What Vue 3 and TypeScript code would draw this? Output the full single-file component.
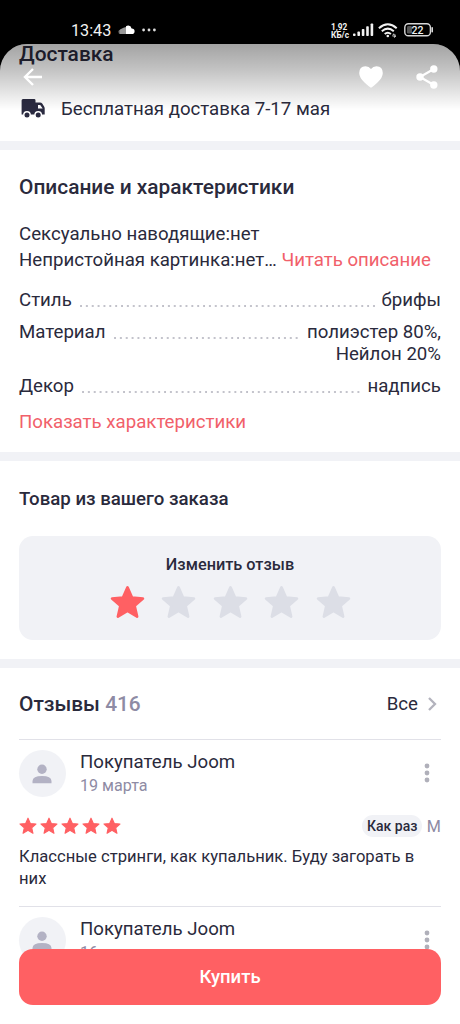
<script setup lang="ts">
interface Spec {
  label: string
  lines: string[]
}

interface Review {
  author: string
  date: string
  stars: number
  fit: string
  size: string
  text: string
}

const specs: Spec[] = [
  { label: 'Стиль', lines: ['брифы'] },
  { label: 'Материал', lines: ['полиэстер 80%,', 'Нейлон 20%'] },
  { label: 'Декор', lines: ['надпись'] },
]

const myRating = 1

const reviews: Review[] = [
  {
    author: 'Покупатель Joom',
    date: '19 марта',
    stars: 5,
    fit: 'Как раз',
    size: 'M',
    text: 'Классные стринги, как купальник. Буду загорать в них',
  },
  { author: 'Покупатель Joom', date: '16 марта', stars: 0, fit: '', size: '', text: '' },
]

const starPath =
  'M12 1.6 L15.1 8.6 L22.6 9.3 L16.9 14.3 L18.6 21.7 L12 17.8 L5.4 21.7 L7.1 14.3 L1.4 9.3 L8.9 8.6 Z'
</script>

<template>
  <div class="screen">
    <div class="status">
      <span class="clock">13:43</span>
      <svg class="cloud" viewBox="0 0 17 10">
        <path d="M0.5 6.5 Q0.6 5 2 4.8 V9 H1.6 Q0.5 8.6 0.5 6.5Z" fill="#777" />
        <path d="M2 4.6 L4 3.5 L5.5 2.8 L8 2 V9 H2Z" fill="#999" />
        <path d="M8 1.3 Q9.2 0.5 10.3 0.6 Q13 0.8 13.6 3.6 Q16.5 3.5 16.6 6.2 Q16.5 9 14 9 H8Z" fill="#fff" />
      </svg>
      <svg class="more" viewBox="0 0 14 4" fill="#ddd">
        <circle cx="1.6" cy="2" r="1.4" /><circle cx="7" cy="2" r="1.4" /><circle cx="12.4" cy="2" r="1.4" />
      </svg>
      <span class="speed"><span>1,92</span><span>КБ/с</span></span>
      <svg class="signal" viewBox="0 0 21 14" fill="#f2f2f2">
        <rect x="0" y="10.6" width="2.6" height="2.4" rx=".8" />
        <rect x="4.4" y="8.6" width="2.6" height="4.4" rx=".8" />
        <rect x="8.8" y="6" width="2.6" height="7" rx=".8" />
        <rect x="13.2" y="3.2" width="2.6" height="9.8" rx=".8" />
        <rect x="17.6" y="0.4" width="2.6" height="12.6" rx=".8" />
      </svg>
      <svg class="wifi" viewBox="0 0 20 15" fill="none" stroke="#f2f2f2" stroke-width="2">
        <path d="M0.9 5.2 Q9.8 -2.6 18.7 5.2" />
        <path d="M3.8 8.2 Q9.8 3.1 15.8 8.2" />
        <path d="M6.7 11 Q9.8 8.4 12.9 11" />
        <circle cx="9.8" cy="13" r="1.3" fill="#f2f2f2" stroke="none" />
        <path d="M14.4 12.2 L16 10.8 V12.2 H18 M18 13 L16.4 14.4 V13 H14.4" stroke-width=".8" />
      </svg>
      <svg class="battery" viewBox="0 0 30 14">
        <rect x=".8" y=".8" width="25.6" height="12" rx="3.6" fill="none" stroke="#d8d8d8" stroke-width="1.4" />
        <rect x="3" y="3" width="5" height="7.6" rx="1.4" fill="#555" />
        <path d="M28.2 4.8 V8.8" stroke="#d8d8d8" stroke-width="1.6" stroke-linecap="round" />
        <text x="13.5" y="10.6" text-anchor="middle" fill="#f2f2f2">22</text>
      </svg>
    </div>

    <main class="sheet">
      <section class="delivery">
        <h2>Доставка</h2>
        <div class="ship">
          <svg class="truck" viewBox="0 0 24 20">
            <path
              d="M2 0 H13.2 Q14.5 0 14.5 1.4 V3.5 H19 Q20.4 3.5 21.2 4.6 L23.1 7.5 Q23.7 8.4 23.7 9.5 V15.6 H0.6 V1.5 Q0.6 0 2 0Z"
              fill="#2a2a40"
            />
            <path d="M17 6 H19.2 L21.7 9.6 H17Z" fill="#fff" />
            <g fill="#2a2a40" stroke="#fff" stroke-width="1.4">
              <circle cx="6" cy="16" r="3.2" /><circle cx="17.2" cy="16" r="3.2" />
            </g>
          </svg>
          <span>Бесплатная доставка 7-17 мая</span>
        </div>
      </section>

      <section class="description">
        <h2>Описание и характеристики</h2>
        <p class="about">
          Сексуально наводящие:нет<br />Непристойная картинка:нет… <a>Читать описание</a>
        </p>
        <dl class="specs">
          <div v-for="spec in specs" :key="spec.label" class="spec">
            <dt>{{ spec.label }}</dt>
            <span class="leader"></span>
            <dd><span v-for="line in spec.lines" :key="line">{{ line }}</span></dd>
          </div>
        </dl>
        <a class="show-all">Показать характеристики</a>
      </section>

      <section class="order">
        <h3>Товар из вашего заказа</h3>
        <div class="rate">
          <strong>Изменить отзыв</strong>
          <div class="rate-stars">
            <svg v-for="n in 5" :key="n" viewBox="0 0 24 24" :class="{ on: n <= myRating }">
              <path :d="starPath" />
            </svg>
          </div>
        </div>
      </section>

      <section class="reviews">
        <header>
          <h2>Отзывы <span>416</span></h2>
          <a class="all">
            Все
            <svg viewBox="0 0 10 16"><path d="M2 2 L8 8 L2 14" /></svg>
          </a>
        </header>
        <article v-for="(review, i) in reviews" :key="i">
          <div class="who">
            <span class="avatar">
              <svg viewBox="0 0 20 20">
                <circle cx="10" cy="5.2" r="4.7" />
                <path d="M0.5 19.3 V17 Q0.8 12 10 12 Q19.2 12 19.5 17 V19.3Z" />
              </svg>
            </span>
            <div class="name">
              <b>{{ review.author }}</b>
              <time>{{ review.date }}</time>
            </div>
            <svg class="kebab" viewBox="0 0 6 20">
              <circle cx="3" cy="3" r="2.4" /><circle cx="3" cy="10" r="2.4" /><circle cx="3" cy="17" r="2.4" />
            </svg>
          </div>
          <template v-if="review.text">
            <div class="score">
              <svg v-for="n in review.stars" :key="n" viewBox="0 0 24 24"><path :d="starPath" /></svg>
              <span class="fit">{{ review.fit }}</span>
              <span class="size">{{ review.size }}</span>
            </div>
            <p>{{ review.text }}</p>
          </template>
        </article>
      </section>
    </main>

    <nav class="toolbar">
      <svg class="back" viewBox="0 0 20 18"><path d="M10 1 L2 9 L10 17 M2 9 H19" /></svg>
      <svg class="heart" viewBox="0 0 24 22">
        <path d="M12 21.8 Q10.8 21.3 5.5 16.4 Q0.2 11.4 0.2 6.9 Q0.3 0.6 6.5 0.2 Q10 0.2 12 3 Q14 0.2 17.5 0.2 Q23.7 0.6 23.8 6.9 Q23.8 11.4 18.5 16.4 Q13.2 21.3 12 21.8Z" />
      </svg>
      <svg class="share" viewBox="0 0 22 24">
        <path d="M17.8 4 L4 12 L17.8 20" />
        <circle cx="17.8" cy="4" r="3.7" /><circle cx="4" cy="12" r="3.7" /><circle cx="17.8" cy="20" r="3.7" />
      </svg>
    </nav>

    <button class="buy">Купить</button>
  </div>
</template>

<style>
body {
  margin: 0;
  background: #000;
}
</style>

<style scoped>
.screen {
  position: relative;
  width: 460px;
  height: 1024px;
  overflow: hidden;
  background: #000;
  color: #2a2a3c;
  font-family: Roboto, 'Noto Sans', sans-serif;
  font-size: 18.65px;
}
h2,
h3,
p,
dl,
dd {
  margin: 0;
}
h2 {
  font-size: 20.9px;
  font-weight: 500;
  line-height: 26px;
}
h3 {
  font-size: 18.65px;
  font-weight: 500;
  line-height: 24px;
}
a {
  color: #f1606a;
}
svg {
  display: block;
  flex: none;
}

.status {
  display: flex;
  align-items: center;
  box-sizing: border-box;
  height: 44px;
  padding: 16px 26px 0 71px;
  color: #f2f2f2;
}
.clock {
  width: 47px;
  padding-top: 1px;
  font-size: 16.2px;
  line-height: 20px;
}
.cloud {
  width: 17px;
  height: 10px;
}
.more {
  width: 14px;
  height: 4px;
  margin-left: 7px;
}
.speed {
  display: flex;
  flex-direction: column;
  margin-left: auto;
  margin-right: 4px;
  padding-top: 2px;
  font-size: 8.3px;
  font-weight: 700;
  line-height: 8.2px;
}
.signal {
  width: 21px;
  height: 14px;
  margin-right: 4px;
}
.wifi {
  width: 20px;
  height: 15px;
  margin-right: 6px;
}
.battery {
  width: 30px;
  height: 14px;
}
.battery text {
  font-size: 10.5px;
  font-weight: 500;
}

.sheet {
  height: 980px;
  overflow: hidden;
  border-radius: 27px 27px 0 0;
  background: #fff;
}
section {
  box-sizing: border-box;
  padding: 0 19px;
  border-bottom: 9px solid #f1f2f6;
}
.delivery {
  display: flow-root;
  height: 106px;
}
.delivery h2 {
  margin-top: -3px;
}
.ship {
  display: flex;
  align-items: center;
  height: 26px;
  margin-top: 29px;
}
.truck {
  width: 24px;
  height: 20px;
  margin: 0 16px 0 2px;
}

.description {
  height: 311px;
  padding-top: 24px;
}
.about {
  margin-top: 21px;
  line-height: 26px;
  white-space: nowrap;
}
.specs {
  margin-top: 16px;
  line-height: 22px;
}
.spec {
  display: flex;
  margin-bottom: 10px;
}
.leader {
  flex: 1;
  height: 2px;
  margin: 16px 7px 0 8px;
  background: radial-gradient(circle at 1px 1px, #b4b4be 0.6px, transparent 1.1px) 0 0 / 5.86px 2px repeat-x;
}
dd span {
  display: block;
  text-align: right;
}
.show-all {
  display: block;
  margin-top: 14px;
  line-height: 22px;
}

.order {
  height: 207px;
  padding-top: 26px;
}
.rate {
  height: 104px;
  margin-top: 25px;
  border-radius: 14px;
  background: #f1f2f6;
  text-align: center;
}
.rate strong {
  display: block;
  padding-top: 19px;
  font-size: 16.3px;
  font-weight: 500;
  line-height: 20px;
}
.rate-stars {
  display: flex;
  justify-content: center;
  gap: 16.5px;
  margin-top: 10px;
}
.rate-stars svg {
  width: 35px;
  height: 35px;
  fill: #dcdee6;
  stroke: #dcdee6;
  stroke-width: 1.8;
  stroke-linejoin: round;
}
.rate-stars .on {
  fill: #ff6063;
  stroke: #ff6063;
}

.reviews {
  border: 0;
}
.reviews header {
  display: flex;
  align-items: center;
  justify-content: space-between;
  height: 71px;
  padding-top: 1px;
  box-sizing: border-box;
}
.reviews h2 span {
  color: #8e8ba4;
}
.all {
  display: flex;
  align-items: center;
  color: #2a2a3c;
}
.all svg {
  width: 10px;
  height: 16px;
  margin: 0 4px 0 9px;
  fill: none;
  stroke: #b3b3bd;
  stroke-width: 2.3;
}
article {
  height: 166px;
  border-top: 1px solid #e1e1e8;
}
.who {
  display: flex;
  padding-top: 10px;
}
.avatar {
  display: flex;
  align-items: center;
  justify-content: center;
  width: 47px;
  height: 47px;
  border-radius: 50%;
  background: #f1f2f6;
}
.avatar svg {
  width: 20px;
  height: 20px;
  margin-right: 1px;
  fill: #b3b2c4;
}
.name {
  flex: 1;
  padding-left: 14px;
}
.name b {
  display: block;
  font-weight: 400;
  line-height: 24px;
}
.name time {
  display: block;
  padding-top: 1px;
  color: #8e8ba4;
  font-size: 16.1px;
  line-height: 22px;
}
.kebab {
  width: 6px;
  height: 20px;
  margin: 13px 11px 0 0;
  fill: #b0b0ba;
}
.score {
  display: flex;
  align-items: center;
  height: 22px;
  margin-top: 18px;
}
.score svg {
  width: 18px;
  height: 18px;
  margin-right: 2.9px;
  fill: #ff6063;
  stroke: #ff6063;
  stroke-width: 1.5;
  stroke-linejoin: round;
}
.fit {
  margin: 0 5px 0 auto;
  padding: 0 4.5px;
  border-radius: 11px;
  background: #f1f2f6;
  font-size: 14px;
  font-weight: 500;
  line-height: 22px;
}
.size {
  color: #8e8ba4;
  font-size: 16.2px;
}
article p {
  margin-top: 9px;
  font-size: 16.6px;
  line-height: 22.4px;
}

.toolbar {
  position: absolute;
  top: 44px;
  left: 0;
  display: flex;
  align-items: flex-start;
  box-sizing: border-box;
  width: 460px;
  height: 66px;
  padding: 21px 22px 0 23px;
  border-radius: 27px 27px 0 0;
  background: linear-gradient(rgba(0, 0, 0, 0.36), rgba(0, 0, 0, 0.23) 40%, transparent);
}
.toolbar svg {
  fill: #fff;
}
.toolbar .back {
  width: 20px;
  height: 18px;
  margin: 3px auto 0 0;
  fill: none;
  stroke: #fff;
  stroke-width: 2.4;
}
.heart {
  width: 24px;
  height: 22px;
  margin: 1px 33px 0 0;
}
.share {
  width: 22px;
  height: 24px;
}
.share path {
  fill: none;
  stroke: #fff;
  stroke-width: 2.2;
}

.buy {
  position: absolute;
  bottom: 19px;
  left: 19px;
  width: 422px;
  height: 56px;
  padding: 0;
  border: 0;
  border-radius: 14px;
  background: #ff6063;
  color: #fff;
  font: 500 18.5px Roboto, sans-serif;
}
</style>
